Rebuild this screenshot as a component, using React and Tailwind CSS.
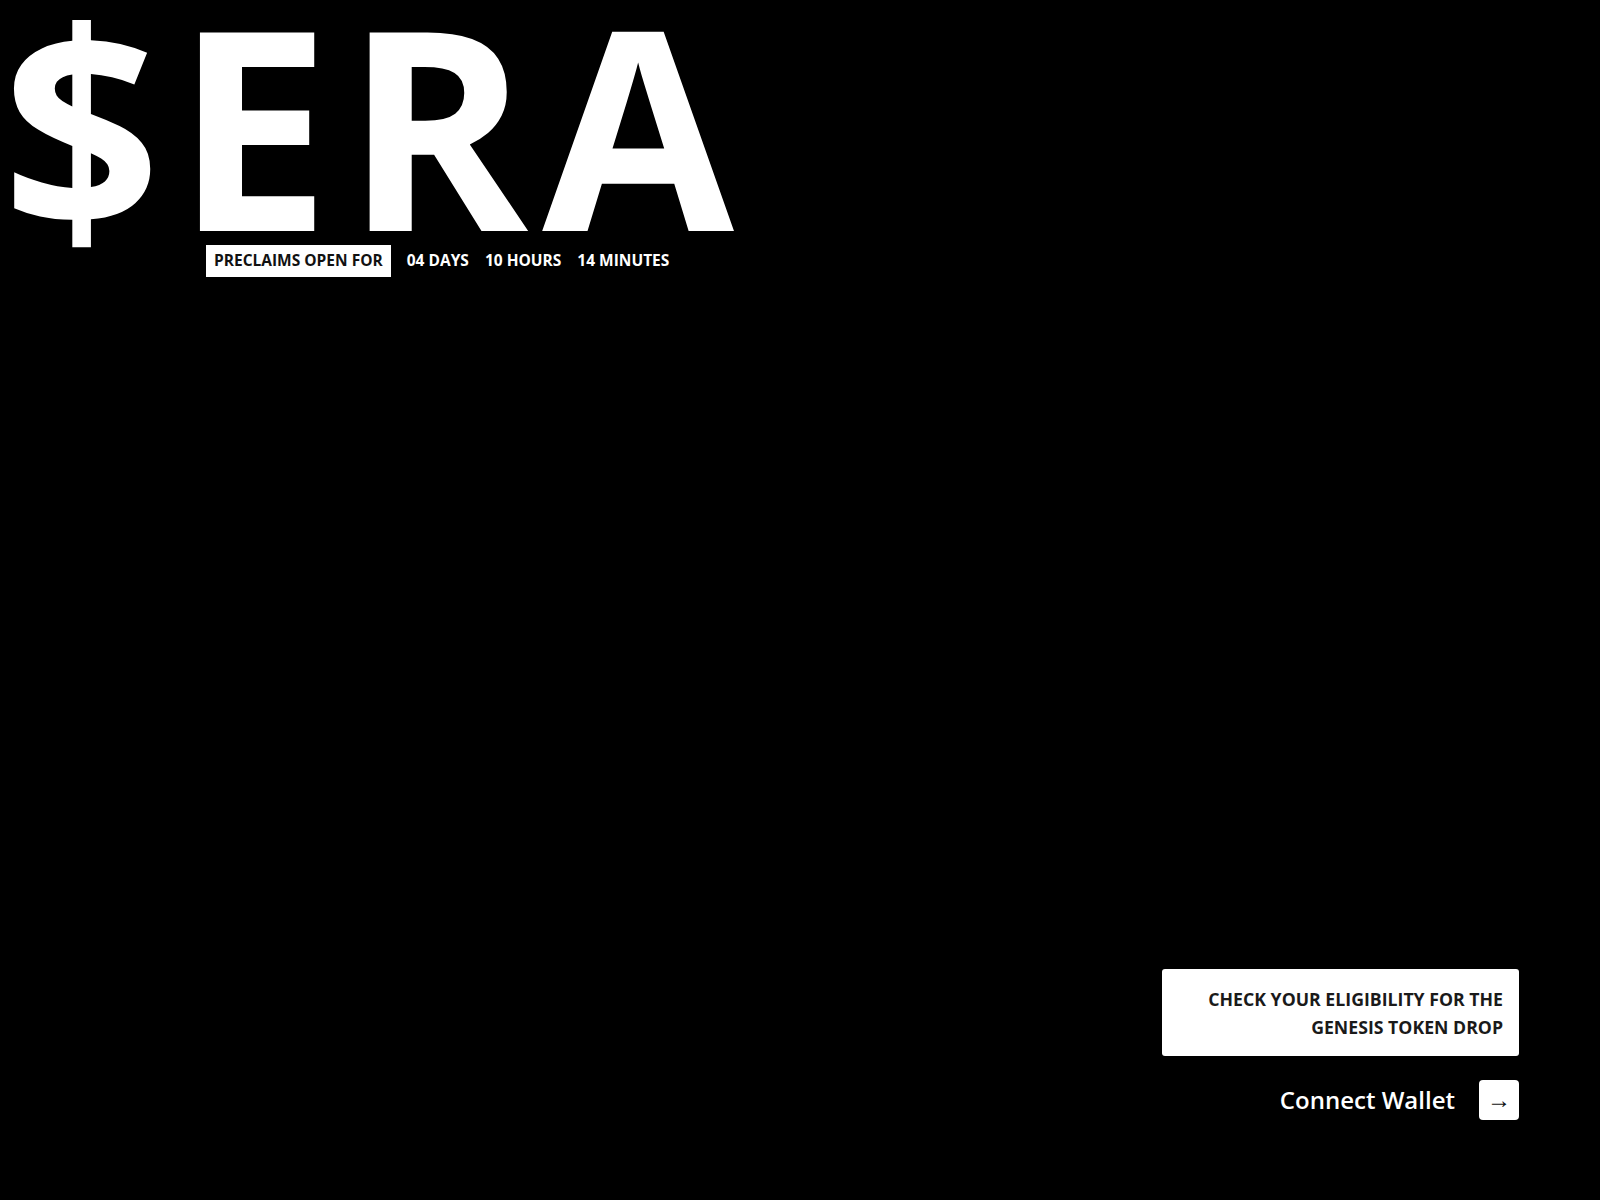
import React from 'react';

const font = { fontFamily: '"Open Sans", "Noto Sans", sans-serif' };

const Countdown = () => (
  <div className="flex items-center gap-4 ml-[206px] mt-[5px] text-[15.5px] leading-none font-bold">
    <span className="bg-white text-[#111] px-2 py-2">PRECLAIMS OPEN FOR</span>
    <span className="text-white">04 DAYS</span>
    <span className="text-white">10 HOURS</span>
    <span className="text-white">14 MINUTES</span>
  </div>
);

export default function App() {
  return (
    <div style={font} className="bg-black w-full h-[1200px] flex flex-col justify-between pb-[80px] pr-[81px] overflow-hidden">
      <div>
        <h1 className="text-white font-bold text-[278px] leading-[230px] tracking-[14px] pl-[2px] pt-[8px] h-[240px] whitespace-nowrap">
          $ERA
        </h1>
        <Countdown />
      </div>

      <div className="flex flex-col items-end gap-6">
        <div className="bg-white rounded-[3px] w-[357px] h-[87px] px-4 flex flex-col justify-center items-end text-right text-[17.7px] font-bold leading-[28px] text-[#1a1a1a]">
          <div>CHECK YOUR ELIGIBILITY FOR THE</div>
          <div>GENESIS TOKEN DROP</div>
        </div>
        <button className="flex items-center gap-6 text-white">
          <span className="text-[24px] font-semibold">Connect Wallet</span>
          <span className="bg-white text-[#111] w-10 h-10 rounded flex items-center justify-center text-[24px] leading-none pb-[3px]">→</span>
        </button>
      </div>
    </div>
  );
}
